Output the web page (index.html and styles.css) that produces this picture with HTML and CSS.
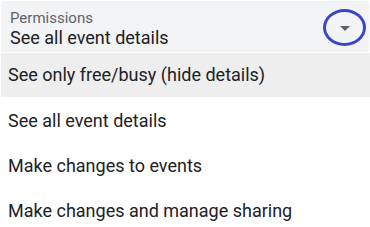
FILE: index.html
```html
<!DOCTYPE html>
<html>
<head>
<meta charset="utf-8">
<link rel="stylesheet" href="styles.css">
</head>
<body>
<div class="select">
  <div class="field">
    <div class="field-text">
      <div class="label">Permissions</div>
      <div class="value">See all event details</div>
    </div>
    <div class="arrow-wrap">
      <svg class="arrow" width="24" height="24" viewBox="0 0 24 24"><path d="M7 10l5 5 5-5z" fill="#5f6368"/></svg>
      <span class="mark"></span>
    </div>
  </div>
  <ul class="menu">
    <li class="item active">See only free/busy (hide details)</li>
    <li class="item">See all event details</li>
    <li class="item">Make changes to events</li>
    <li class="item">Make changes and manage sharing</li>
  </ul>
</div>
</body>
</html>
```

FILE: styles.css
```css
html, body {
  margin: 0;
  padding: 0;
  background: #ffffff;
  font-family: Roboto, "Liberation Sans", sans-serif;
  color: #202124;
}
.select {
  width: 370px;
}
.field {
  margin: 1px 1px 0 1px;
  height: 51px;
  background: #f1f3f4;
  border-radius: 4px 4px 0 0;
  display: flex;
  align-items: flex-start;
  justify-content: space-between;
  box-sizing: border-box;
  padding: 8px 0 0 9px;
}
.label {
  font-size: 15px;
  line-height: 18px;
  color: #5f6368;
}
.value {
  font-size: 18px;
  line-height: 22px;
  color: #202124;
}
.arrow-wrap {
  position: relative;
  width: 24px;
  height: 24px;
  margin: 7px 12px 0 0;
}
.arrow {
  display: block;
}
.mark {
  position: absolute;
  left: -10px;
  top: -7px;
  width: 43px;
  height: 37px;
  box-sizing: border-box;
  border: 3px solid #3b45c8;
  border-radius: 50%;
}
.menu {
  list-style: none;
  margin: 1px 0 0 0;
  padding: 0;
}
.item {
  height: 45px;
  line-height: 45px;
  font-size: 18px;
  padding-left: 8px;
  color: #202124;
}
.item.active {
  background: #eeeeee;
  margin-left: 1px;
  padding-left: 7px;
  height: 44px;
  line-height: 44px;
  margin-bottom: 1px;
}
```
